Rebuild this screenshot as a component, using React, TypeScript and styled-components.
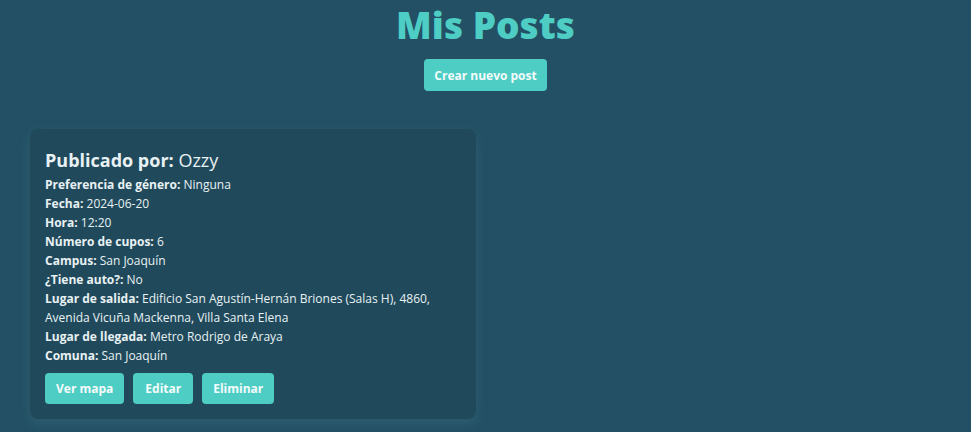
import React from "react";
import styled, { createGlobalStyle } from "styled-components";

const GlobalStyle = createGlobalStyle`
  html, body {
    margin: 0;
    padding: 0;
    background: #235064;
    font-family: "Open Sans", "Noto Sans", sans-serif;
    color: #e8f1f3;
  }
`;

const Page = styled.div`
  display: flex;
  flex-direction: column;
  align-items: center;
  padding: 0 30px;
  min-height: 432px;
  box-sizing: border-box;
`;

const Title = styled.h1`
  margin: 0;
  padding-top: 2px;
  font-size: 37px;
  line-height: 46px;
  font-weight: 800;
  color: #4ecdc4;
`;

const Button = styled.button<{ $h?: number; $px?: number }>`
  background: #4ecdc4;
  color: #f4fbfb;
  border: none;
  border-radius: 4px;
  font-family: inherit;
  font-size: 12px;
  font-weight: 700;
  height: ${(p) => p.$h ?? 32}px;
  padding: 0 ${(p) => p.$px ?? 11}px;
  cursor: pointer;
`;

const TopBar = styled.div`
  margin-top: 11px;
  display: flex;
  justify-content: center;
`;

const Grid = styled.div`
  align-self: stretch;
  margin-top: 38px;
  display: grid;
  grid-template-columns: 446px;
`;

const Card = styled.div`
  background: #204a5c;
  border-radius: 8px;
  padding: 19px 15px 15px;
  box-shadow: 0 4px 12px rgba(70, 120, 140, 0.35);
`;

const Heading = styled.h2`
  margin: 0 0 3px;
  font-size: 18px;
  line-height: 24px;
  font-weight: 700;
  span {
    font-weight: 400;
  }
`;

const Line = styled.p`
  margin: 0;
  font-size: 12px;
  line-height: 19px;
  b {
    font-weight: 700;
  }
`;

const Actions = styled.div`
  margin-top: 8px;
  display: flex;
  gap: 9px;
`;

const fields: [string, string][] = [
  ["Preferencia de género", "Ninguna"],
  ["Fecha", "2024-06-20"],
  ["Hora", "12:20"],
  ["Número de cupos", "6"],
  ["Campus", "San Joaquín"],
  ["¿Tiene auto?", "No"],
  [
    "Lugar de salida",
    "Edificio San Agustín-Hernán Briones (Salas H), 4860, Avenida Vicuña Mackenna, Villa Santa Elena",
  ],
  ["Lugar de llegada", "Metro Rodrigo de Araya"],
  ["Comuna", "San Joaquín"],
];

export default function App() {
  return (
    <>
      <GlobalStyle />
      <Page>
        <Title>Mis Posts</Title>
        <TopBar>
          <Button $px={10}>Crear nuevo post</Button>
        </TopBar>
        <Grid>
          <Card>
            <Heading>
              Publicado por: <span>Ozzy</span>
            </Heading>
            {fields.map(([k, v]) => (
              <Line key={k}>
                <b>{k}:</b> {v}
              </Line>
            ))}
            <Actions>
              <Button $h={31} $px={11}>Ver mapa</Button>
              <Button $h={31} $px={12}>Editar</Button>
              <Button $h={31} $px={11}>Eliminar</Button>
            </Actions>
          </Card>
        </Grid>
      </Page>
    </>
  );
}
